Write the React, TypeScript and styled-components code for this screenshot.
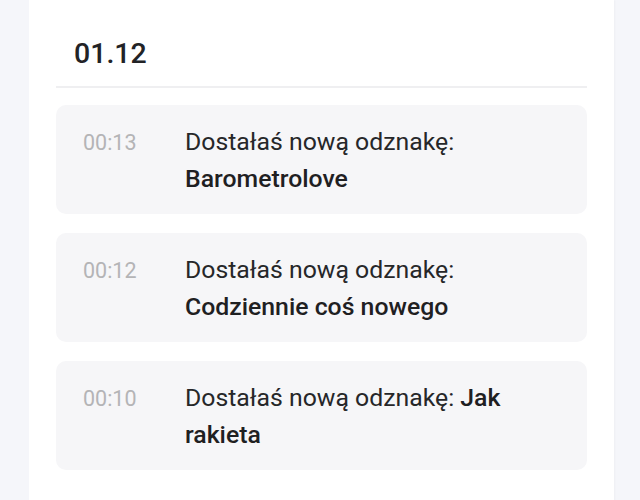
import React from "react";
import styled, { createGlobalStyle } from "styled-components";

const Global = createGlobalStyle`
  html, body {
    margin: 0;
    padding: 0;
    background: #f5f6fa;
    font-family: Roboto, "Noto Sans", "Liberation Sans", sans-serif;
  }
`;

const Page = styled.div`
  padding: 0 26px 0 29px;
  height: 500px;
  overflow: hidden;
`;

const Card = styled.section`
  background: #ffffff;
  box-shadow: 1px 0 2px rgba(0, 0, 0, 0.03);
  padding: 0 27px 40px;
  min-height: 500px;
  box-sizing: border-box;
`;

const DateHeader = styled.h2`
  margin: 0 0 17px;
  padding: 36px 18px 14px;
  font-size: 28.5px;
  line-height: 36px;
  font-weight: 500;
  color: #222326;
  border-bottom: 2px solid #efeff1;
`;

const List = styled.div`
  display: flex;
  flex-direction: column;
  gap: 19px;
`;

const Item = styled.div`
  display: grid;
  grid-template-columns: 102px 1fr;
  align-items: baseline;
  background: #f6f6f8;
  border-radius: 10px;
  padding: 18px 27px 17px;
  font-size: 24.8px;
  line-height: 37px;
`;

const Time = styled.span`
  color: #b4b4b6;
  font-size: 21.5px;
`;

const Message = styled.span`
  color: #262729;
`;

const Badge = styled.b`
  font-weight: 500;
  color: #1f2022;
`;

const items = [
  { time: "00:13", badge: "Barometrolove" },
  { time: "00:12", badge: "Codziennie coś nowego" },
  { time: "00:10", badge: "Jak rakieta" },
];

export default function App() {
  return (
    <>
      <Global />
      <Page>
        <Card>
          <DateHeader>01.12</DateHeader>
          <List>
            {items.map((it) => (
              <Item key={it.time}>
                <Time>{it.time}</Time>
                <Message>
                  Dostałaś nową odznakę: <Badge>{it.badge}</Badge>
                </Message>
              </Item>
            ))}
          </List>
        </Card>
      </Page>
    </>
  );
}
